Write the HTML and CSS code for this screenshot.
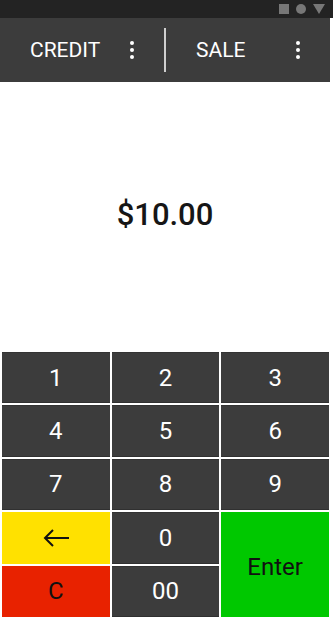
FILE: index.html
```html
<!DOCTYPE html>
<html lang="en">
<head>
    <meta charset="UTF-8">
    <meta name="viewport" content="width=device-width, initial-scale=1.0">
    <title>Terminal Keypad</title>
    <link rel="stylesheet" href="styles.css">
</head>
<body>
    <div class="status-bar">
        <span class="status-icon status-icon--square"></span>
        <span class="status-icon status-icon--circle"></span>
        <span class="status-icon status-icon--triangle"></span>
    </div>
    <div class="app">
        <div class="toolbar">
            <div class="toolbar__group">
                <span class="toolbar__label">CREDIT</span>
                <span class="toolbar__menu" aria-label="More">
                    <svg width="4" height="18" viewBox="0 0 4 18"><circle cx="2" cy="2" r="2" fill="#fff"/><circle cx="2" cy="9" r="2" fill="#fff"/><circle cx="2" cy="16" r="2" fill="#fff"/></svg>
                </span>
            </div>
            <div class="toolbar__divider"></div>
            <div class="toolbar__group">
                <span class="toolbar__label">SALE</span>
                <span class="toolbar__menu" aria-label="More">
                    <svg width="4" height="18" viewBox="0 0 4 18"><circle cx="2" cy="2" r="2" fill="#fff"/><circle cx="2" cy="9" r="2" fill="#fff"/><circle cx="2" cy="16" r="2" fill="#fff"/></svg>
                </span>
            </div>
        </div>

        <div class="amount" id="amount">$10.00</div>

        <div class="keypad">
            <button class="key">1</button>
            <button class="key">2</button>
            <button class="key">3</button>
            <button class="key">4</button>
            <button class="key">5</button>
            <button class="key">6</button>
            <button class="key">7</button>
            <button class="key">8</button>
            <button class="key">9</button>
            <button class="key key--back" aria-label="Backspace">
                <svg width="28" height="20" viewBox="0 0 28 20"><path d="M27 10H3M11 2L3 10l8 8" fill="none" stroke="#111" stroke-width="2"/></svg>
            </button>
            <button class="key">0</button>
            <button class="key key--enter">Enter</button>
            <button class="key key--clear">C</button>
            <button class="key">00</button>
        </div>
    </div>
</body>
</html>
```

FILE: styles.css
```css
* {
    margin: 0;
    padding: 0;
    box-sizing: border-box;
}
body {
    font-family: Roboto, "Noto Sans", sans-serif;
    background-color: #ffffff;
    width: 333px;
    height: 620px;
    overflow: hidden;
}
.status-bar {
    height: 18px;
    background-color: #232323;
    display: flex;
    align-items: center;
    justify-content: flex-end;
    gap: 7px;
    padding-right: 8px;
}
.status-icon {
    display: block;
    width: 10px;
    height: 10px;
    background-color: #777777;
}
.status-icon--circle {
    border-radius: 50%;
}
.status-icon--triangle {
    width: 12px;
    height: 10px;
    clip-path: polygon(0 0, 100% 0, 50% 100%);
}
.app {
    width: 330px;
}
.toolbar {
    height: 64px;
    background-color: #3c3c3c;
    display: flex;
    align-items: center;
}
.toolbar__group {
    flex: 1;
    display: flex;
    align-items: center;
    justify-content: space-between;
    padding-left: 30px;
    padding-right: 30px;
}
.toolbar__label {
    color: #ffffff;
    font-size: 21px;
}
.toolbar__menu {
    display: flex;
}
.toolbar__divider {
    width: 2px;
    height: 44px;
    background-color: #cfcfcf;
}
.amount {
    height: 270px;
    padding-bottom: 6px;
    display: flex;
    align-items: center;
    justify-content: center;
    font-size: 31px;
    font-weight: 500;
    color: #161616;
}
.keypad {
    display: grid;
    grid-template-columns: repeat(3, 1fr);
    grid-template-rows: repeat(5, 51.4px);
    gap: 2px;
    margin-left: 2px;
    width: 327px;
}
.key {
    font-family: inherit;
    font-size: 24px;
    color: #ffffff;
    background-color: #3c3c3c;
    border: none;
    border-top: 1px solid #333333;
    border-bottom: 1px solid #303030;
    display: flex;
    align-items: center;
    justify-content: center;
    cursor: pointer;
}
.key--back {
    background-color: #ffe100;
    border-color: #ffe100;
}
.key--clear {
    background-color: #e82200;
    border-color: #e82200;
    color: #111111;
}
.key--enter {
    grid-row: span 2;
    padding-top: 4px;
    background-color: #00c800;
    border-color: #00c800;
    color: #111111;
}
```
